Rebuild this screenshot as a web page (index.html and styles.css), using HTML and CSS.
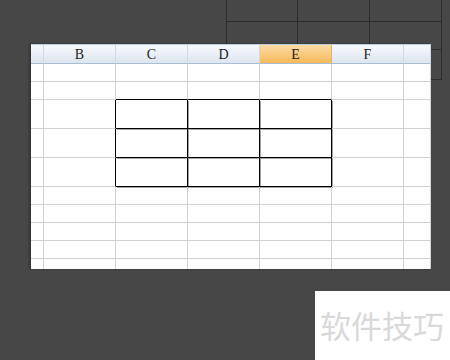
FILE: index.html
```html
<!DOCTYPE html>
<html lang="zh-CN">
<head>
  <meta charset="UTF-8" />
  <title>表格边框</title>
  <link rel="stylesheet" href="styles.css">
</head>
<body>

  <div class="backdrop">
    <div></div><div></div><div></div>
    <div></div><div></div><div></div>
    <div></div><div></div><div></div>
  </div>

  <div class="sheet">
    <div class="hd corner"></div>
    <div class="hd">B</div>
    <div class="hd">C</div>
    <div class="hd">D</div>
    <div class="hd active">E</div>
    <div class="hd">F</div>
    <div class="hd"></div>
  </div>

  <div class="watermark">软件技巧</div>

  <script>
    // body rows below the header: heights in px, black box sits in rows 3-5, columns C-E
    const rows = [18, 18, 29, 29, 29, 18, 18, 18, 18, 10];
    const sheet = document.querySelector('.sheet');
    sheet.style.gridTemplateRows = '20px ' + rows.map(h => h + 'px').join(' ');

    rows.forEach((h, r) => {
      for (let c = 0; c < 7; c++) {
        const cell = document.createElement('div');
        cell.className = 'cell';
        if (r >= 2 && r <= 4 && c >= 2 && c <= 4) cell.classList.add('boxed');
        if (r === 1 && c >= 2 && c <= 4) cell.classList.add('box-top');
        if (r >= 2 && r <= 4 && c === 1) cell.classList.add('box-left');
        if (r === rows.length - 1) cell.classList.add('last');
        sheet.appendChild(cell);
      }
    });
  </script>

</body>
</html>
```

FILE: styles.css
```css
body {
  margin: 0;
  width: 450px;
  height: 360px;
  overflow: hidden;
  position: relative;
  background-color: #474747;
  padding: 44px 0 0 31px;
  box-sizing: border-box;
}

.backdrop {
  position: absolute;
  left: 226px;
  top: 0;
  display: grid;
  grid-template-columns: 71px 72px 72px;
  grid-template-rows: 22px 28px 30px;
  border-left: 1px solid #2c2c2c;
}

.backdrop div {
  border-right: 1px solid #2c2c2c;
  border-bottom: 1px solid #2c2c2c;
}

.sheet {
  position: relative;
  width: 400px;
  height: 225px;
  display: grid;
  grid-template-columns: 13px repeat(5, 72px) 27px;
  background-color: #fff;
  box-shadow: -2px 0 2px rgba(0, 0, 0, 0.25);
}

.hd {
  display: flex;
  justify-content: center;
  align-items: center;
  padding-top: 1px;
  font-family: "Liberation Serif", "DejaVu Serif", serif;
  font-size: 14px;
  color: #1c1c1c;
  background: linear-gradient(#f7f9fc, #e9eef6 55%, #dce5f0);
  border-top: 1px solid #b9cce0;
  border-right: 1px solid #cfd8e3;
  border-bottom: 1px solid #a9bdd3;
}

.hd.active {
  background: linear-gradient(#fbdca4, #f9c97c 55%, #f6b959);
  border-right-color: #e3b36a;
}

.cell {
  border-right: 1px solid #d2d2d2;
  border-bottom: 1px solid #d2d2d2;
}

.cell.last {
  border-bottom: none;
}

.cell.boxed {
  border-right-color: #000;
  border-bottom-color: #000;
  box-shadow: 1px 1px 0 rgba(0, 0, 0, 0.35);
}

.cell.box-top {
  border-bottom-color: #000;
}

.cell.box-left {
  border-right-color: #000;
}

.watermark {
  position: absolute;
  left: 315px;
  top: 291px;
  width: 135px;
  height: 69px;
  box-sizing: border-box;
  padding: 18px 0 0 5px;
  background-color: #fff;
  font-family: "Noto Sans CJK SC", sans-serif;
  font-size: 31px;
  line-height: 1;
  color: #d9d9d9;
  white-space: nowrap;
}
```
